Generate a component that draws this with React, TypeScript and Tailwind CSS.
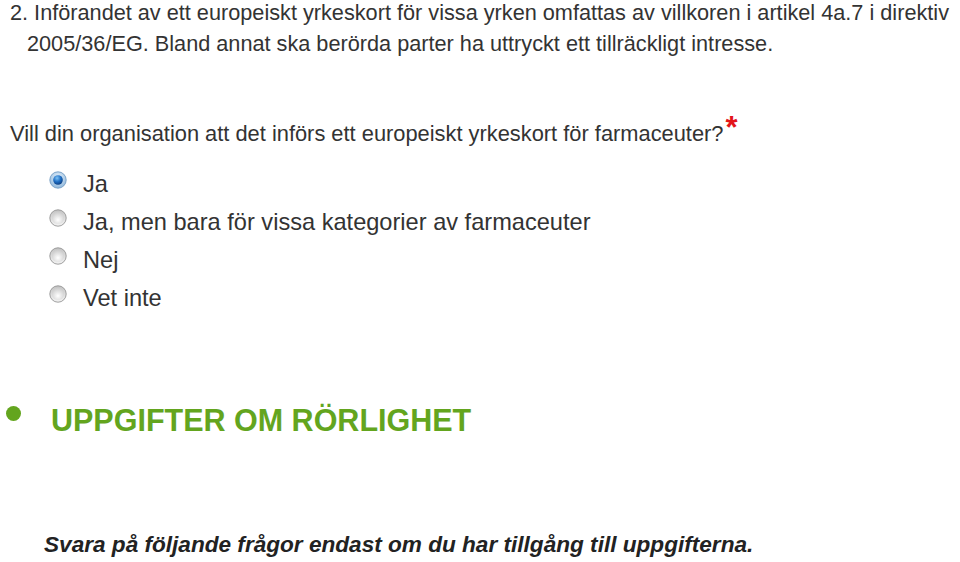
import React from 'react'

type RadioProps = {
  checked?: boolean
}

function Radio({ checked }: RadioProps) {
  if (checked) {
    return (
      <svg width="18" height="18" viewBox="0 0 18 18" className="shrink-0">
        <defs>
          <radialGradient id="ringOn" cx="50%" cy="35%" r="65%">
            <stop offset="0%" stopColor="#e8f2fb" />
            <stop offset="100%" stopColor="#8fb7db" />
          </radialGradient>
          <radialGradient id="dotOn" cx="40%" cy="30%" r="70%">
            <stop offset="0%" stopColor="#7fc3f5" />
            <stop offset="55%" stopColor="#1f6fc4" />
            <stop offset="100%" stopColor="#0b3f85" />
          </radialGradient>
        </defs>
        <circle cx="9" cy="9" r="8.2" fill="url(#ringOn)" stroke="#6a95bf" strokeWidth="0.8" />
        <circle cx="9" cy="9" r="4.8" fill="url(#dotOn)" />
      </svg>
    )
  }
  return (
    <svg width="18" height="18" viewBox="0 0 18 18" className="shrink-0">
      <defs>
        <linearGradient id="ringOff" x1="0" y1="0" x2="0" y2="1">
          <stop offset="0%" stopColor="#c2c2c2" />
          <stop offset="100%" stopColor="#f4f4f4" />
        </linearGradient>
        <radialGradient id="faceOff" cx="50%" cy="65%" r="60%">
          <stop offset="0%" stopColor="#ffffff" />
          <stop offset="100%" stopColor="#cfcfcf" />
        </radialGradient>
      </defs>
      <circle cx="9" cy="9" r="8.2" fill="url(#ringOff)" stroke="#959595" strokeWidth="0.9" />
      <circle cx="9" cy="9" r="6" fill="url(#faceOff)" />
    </svg>
  )
}

const options = [
  { label: 'Ja', checked: true },
  { label: 'Ja, men bara för vissa kategorier av farmaceuter', checked: false },
  { label: 'Nej', checked: false },
  { label: 'Vet inte', checked: false },
]

export default function App() {
  return (
    <div className="w-[960px] h-[562px] overflow-hidden bg-white text-[#333] font-['Liberation_Sans',Arial,Helvetica,sans-serif]">
      {/* Intro paragraph */}
      <p className="mt-[-3px] pl-[27px] pr-[6px] -indent-[17px] text-[21.7px] leading-[31px]">
        2. Införandet av ett europeiskt yrkeskort för vissa yrken omfattas av villkoren i artikel 4a.7 i direktiv
        2005/36/EG. Bland annat ska berörda parter ha uttryckt ett tillräckligt intresse.
      </p>

      {/* Question */}
      <p className="mt-[56px] pl-[10px] text-[21.85px] leading-[31px]">
        Vill din organisation att det införs ett europeiskt yrkeskort för farmaceuter?
        <span className="relative top-[-3px] ml-[2px] text-[31px] font-bold leading-none text-[#e3151a]">*</span>
      </p>

      {/* Answer options */}
      <div className="mt-[16px] flex flex-col">
        {options.map((option) => (
          <label key={option.label} className="flex items-start h-[38px] pl-[49px] text-[23.6px] leading-[38px]">
            <span className="mt-[6px]">
              <Radio checked={option.checked} />
            </span>
            <span className="ml-[16px]">{option.label}</span>
          </label>
        ))}
      </div>

      {/* Section heading */}
      <div className="mt-[85px] flex items-start">
        <span className="ml-[6px] mt-[4px] h-[15px] w-[15px] rounded-full bg-[#63a51e]" />
        <h2 className="ml-[30px] text-[30.5px] font-bold leading-[36px] text-[#63a51e]">
          UPPGIFTER OM RÖRLIGHET
        </h2>
      </div>

      <p className="mt-[94px] pl-[44px] text-[22.6px] leading-[26px] font-bold italic text-[#222]">
        Svara på följande frågor endast om du har tillgång till uppgifterna.
      </p>
    </div>
  )
}
